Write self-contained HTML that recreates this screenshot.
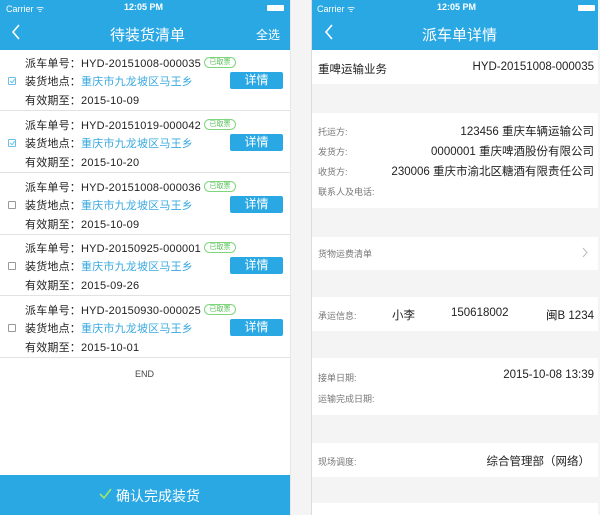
<!DOCTYPE html>
<html><head><meta charset="utf-8"><style>
*{margin:0;padding:0;box-sizing:border-box}
body{width:600px;height:515px;background:#f4f4f4;position:relative;overflow:hidden;font-family:"Liberation Sans","Noto Sans CJK SC",sans-serif}
.a{position:absolute;white-space:nowrap}
.nav{background:#2aa8e4;color:#fff}
.row{position:absolute;left:0;width:290px;height:61px;background:#fff;border-bottom:1px solid #e2e2e2}
.row .t{position:absolute;left:25px;font-size:11px;color:#222;letter-spacing:0.2px}
.bl{color:#3aa9e0}
.badge{position:absolute;left:204px;top:7px;width:32px;height:11px;border:1px solid #7dd67a;border-radius:6px;color:#4cbf4c;font-size:7px;line-height:9px;text-align:center}
.btn{position:absolute;left:230px;top:22px;width:53px;height:17px;background:#2aa8e4;border-radius:2px;color:#fff;font-size:12px;line-height:17px;text-align:center}
.cb{position:absolute;left:8px;top:27px;width:8px;height:8px;border:1px solid #999;border-radius:1px}
.cb.on{border-color:#6cc0e8}
.cb.on:after{content:"";position:absolute;left:1.5px;top:0;width:2px;height:4px;border:solid #6cc0e8;border-width:0 1px 1px 0;transform:rotate(40deg)}
.w{position:absolute;left:312px;width:286px;background:#fff}
.lb{font-size:9px;color:#777}
.v{font-size:11.5px;color:#222}
</style></head><body>
<div class="a" style="left:0;top:0;width:290px;height:515px;background:#fff"></div>
<div class="a" style="left:290px;top:0;width:1px;height:515px;background:#e6e6e6"></div>
<div class="a nav" style="left:0;top:0;width:290px;height:50px"></div>
<div class="a" style="left:6px;top:2px;font-size:9px;color:#fff">Carrier ᯤ</div>
<div class="a" style="left:124px;top:2px;font-size:9px;color:#fff;font-weight:bold">12:05 PM</div>
<div class="a" style="left:267px;top:5px;width:17px;height:6px;background:#fff;border-radius:1px"></div>
<svg class="a" style="left:11px;top:24px" width="10" height="16"><path d="M8 1L2 8L8 15" stroke="#fff" stroke-width="1.6" fill="none"/></svg>
<div class="a" style="left:110px;top:24px;font-size:15px;color:#fff">待装货清单</div>
<div class="a" style="left:256px;top:26px;font-size:12px;color:#fff">全选</div>

<div class="row" style="top:50px"><div class="t" style="top:5px">派车单号：HYD-20151008-000035</div><div class="badge">已取票</div><div class="cb on"></div><div class="t" style="top:23px">装货地点：<span class="bl">重庆市九龙坡区马王乡</span></div><div class="btn">详情</div><div class="t" style="top:42px">有效期至：2015-10-09</div></div>
<div class="row" style="top:112px"><div class="t" style="top:5px">派车单号：HYD-20151019-000042</div><div class="badge">已取票</div><div class="cb on"></div><div class="t" style="top:23px">装货地点：<span class="bl">重庆市九龙坡区马王乡</span></div><div class="btn">详情</div><div class="t" style="top:42px">有效期至：2015-10-20</div></div>
<div class="row" style="top:174px"><div class="t" style="top:5px">派车单号：HYD-20151008-000036</div><div class="badge">已取票</div><div class="cb"></div><div class="t" style="top:23px">装货地点：<span class="bl">重庆市九龙坡区马王乡</span></div><div class="btn">详情</div><div class="t" style="top:42px">有效期至：2015-10-09</div></div>
<div class="row" style="top:235px"><div class="t" style="top:5px">派车单号：HYD-20150925-000001</div><div class="badge">已取票</div><div class="cb"></div><div class="t" style="top:23px">装货地点：<span class="bl">重庆市九龙坡区马王乡</span></div><div class="btn">详情</div><div class="t" style="top:42px">有效期至：2015-09-26</div></div>
<div class="row" style="top:297px"><div class="t" style="top:5px">派车单号：HYD-20150930-000025</div><div class="badge">已取票</div><div class="cb"></div><div class="t" style="top:23px">装货地点：<span class="bl">重庆市九龙坡区马王乡</span></div><div class="btn">详情</div><div class="t" style="top:42px">有效期至：2015-10-01</div></div>
<div class="a" style="left:135px;top:369px;font-size:9px;color:#444">END</div>
<div class="a nav" style="left:0;top:475px;width:290px;height:40px"></div>
<svg class="a" style="left:99px;top:488px" width="13" height="11"><path d="M1 6L5 10L12 1" stroke="#9be86a" stroke-width="1.6" fill="none"/></svg>
<div class="a" style="left:116px;top:486px;font-size:14px;color:#fff">确认完成装货</div>

<div class="a" style="left:311px;top:0;width:1px;height:515px;background:#ddd"></div>
<div class="a nav" style="left:312px;top:0;width:286px;height:50px"></div>
<div class="a" style="left:317px;top:2px;font-size:9px;color:#fff">Carrier ᯤ</div>
<div class="a" style="left:437px;top:2px;font-size:9px;color:#fff;font-weight:bold">12:05 PM</div>
<div class="a" style="left:578px;top:5px;width:17px;height:6px;background:#fff;border-radius:1px"></div>
<svg class="a" style="left:324px;top:24px" width="10" height="16"><path d="M8 1L2 8L8 15" stroke="#fff" stroke-width="1.6" fill="none"/></svg>
<div class="a" style="left:422px;top:24px;font-size:15px;color:#fff">派车单详情</div>

<div class="w" style="top:50px;height:34px"></div>
<div class="a v" style="left:318px;top:61px">重啤运输业务</div>
<div class="a v" style="right:6px;top:61px">HYD-20151008-000035</div>
<div class="w" style="top:113px;height:95px"></div>
<div class="a lb" style="left:318px;top:125px">托运方:</div><div class="a v" style="right:6px;top:123px">123456 重庆车辆运输公司</div>
<div class="a lb" style="left:318px;top:145px">发货方:</div><div class="a v" style="right:6px;top:143px">0000001 重庆啤酒股份有限公司</div>
<div class="a lb" style="left:318px;top:165px">收货方:</div><div class="a v" style="right:6px;top:163px">230006 重庆市渝北区糖酒有限责任公司</div>
<div class="a lb" style="left:318px;top:185px">联系人及电话:</div>
<div class="w" style="top:237px;height:33px"></div>
<div class="a lb" style="left:318px;top:247px">货物运费清单</div>
<svg class="a" style="left:582px;top:247px" width="6" height="11"><path d="M1 1L5 5.5L1 10" stroke="#bbb" fill="none"/></svg>
<div class="w" style="top:297px;height:34px"></div>
<div class="a lb" style="left:318px;top:309px">承运信息:</div>
<div class="a v" style="left:392px;top:307px">小李</div>
<div class="a v" style="left:451px;top:307px">150618002</div>
<div class="a v" style="right:6px;top:307px">闽B 1234</div>
<div class="w" style="top:358px;height:57px"></div>
<div class="a lb" style="left:318px;top:371px">接单日期:</div><div class="a v" style="right:6px;top:369px">2015-10-08 13:39</div>
<div class="a lb" style="left:318px;top:392px">运输完成日期:</div>
<div class="w" style="top:443px;height:34px"></div>
<div class="a lb" style="left:318px;top:455px">现场调度:</div><div class="a v" style="right:10px;top:453px">综合管理部（网络）</div>
<div class="w" style="top:503px;height:12px"></div>
</body></html>
